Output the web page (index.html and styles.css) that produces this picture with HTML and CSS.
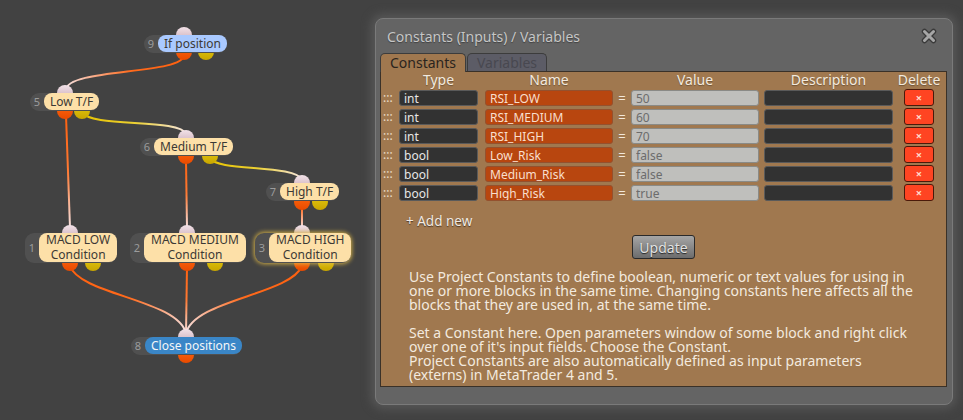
FILE: index.html
```html
<!DOCTYPE html>
<html lang="en">
  <head>
    <meta charset="UTF-8" />
    <title>Constants (Inputs) / Variables</title>
    <link rel="stylesheet" href="styles.css">
  </head>
  <body>
    <!-- Block diagram -->
    <div class="canvas">
      <svg class="wires" width="360" height="420" viewBox="0 0 360 420">
        <defs>
          <linearGradient id="w95" gradientUnits="userSpaceOnUse" x1="184" y1="56" x2="66" y2="90">
            <stop offset="0" stop-color="#ff600e" /><stop offset="0.45" stop-color="#ff6a1c" /><stop offset="1" stop-color="#f6e2e2" />
          </linearGradient>
          <linearGradient id="w56" gradientUnits="userSpaceOnUse" x1="82" y1="112" x2="186" y2="134">
            <stop offset="0" stop-color="#e6c200" /><stop offset="0.5" stop-color="#ecd030" /><stop offset="1" stop-color="#f6e6e2" />
          </linearGradient>
          <linearGradient id="w67" gradientUnits="userSpaceOnUse" x1="210" y1="158" x2="302" y2="180">
            <stop offset="0" stop-color="#e6c200" /><stop offset="0.5" stop-color="#ecd030" /><stop offset="1" stop-color="#f6e6e2" />
          </linearGradient>
          <linearGradient id="w51" gradientUnits="userSpaceOnUse" x1="66" y1="115" x2="70" y2="228">
            <stop offset="0" stop-color="#ff600e" /><stop offset="0.5" stop-color="#ff7a34" /><stop offset="1" stop-color="#f6e2e2" />
          </linearGradient>
          <linearGradient id="w62" gradientUnits="userSpaceOnUse" x1="186" y1="160" x2="187" y2="228">
            <stop offset="0" stop-color="#ff600e" /><stop offset="0.5" stop-color="#ff7a34" /><stop offset="1" stop-color="#f6e2e2" />
          </linearGradient>
          <linearGradient id="w73" gradientUnits="userSpaceOnUse" x1="302" y1="206" x2="302" y2="228">
            <stop offset="0" stop-color="#ff600e" /><stop offset="1" stop-color="#f6e2e2" />
          </linearGradient>
          <linearGradient id="w18" gradientUnits="userSpaceOnUse" x1="70" y1="266" x2="186" y2="334">
            <stop offset="0" stop-color="#ff600e" /><stop offset="0.5" stop-color="#ff6a1c" /><stop offset="1" stop-color="#f6e2e2" />
          </linearGradient>
          <linearGradient id="w28" gradientUnits="userSpaceOnUse" x1="187" y1="266" x2="186" y2="334">
            <stop offset="0" stop-color="#ff600e" /><stop offset="0.5" stop-color="#ff7a34" /><stop offset="1" stop-color="#f6e2e2" />
          </linearGradient>
          <linearGradient id="w38" gradientUnits="userSpaceOnUse" x1="302" y1="266" x2="186" y2="334">
            <stop offset="0" stop-color="#ff600e" /><stop offset="0.5" stop-color="#ff6a1c" /><stop offset="1" stop-color="#f6e2e2" />
          </linearGradient>
          <linearGradient id="pin-in" x1="0" y1="0" x2="0" y2="1">
            <stop offset="0" stop-color="#f2e2e8" /><stop offset="1" stop-color="#c6a6b2" />
          </linearGradient>
          <linearGradient id="pin-out" x1="0" y1="0" x2="0" y2="1">
            <stop offset="0" stop-color="#ff6a10" /><stop offset="1" stop-color="#e84a00" />
          </linearGradient>
          <linearGradient id="pin-alt" x1="0" y1="0" x2="0" y2="1">
            <stop offset="0" stop-color="#e8cc10" /><stop offset="1" stop-color="#c8a600" />
          </linearGradient>
        </defs>

        <!-- links -->
        <g fill="none" stroke-width="2">
          <path d="M184 55 C184 75 66 68 66 90" stroke="url(#w95)" />
          <path d="M82 112 C90 128 180 118 186 134" stroke="url(#w56)" />
          <path d="M210 158 C216 172 296 164 302 180" stroke="url(#w67)" />
          <path d="M66 115 L70 228" stroke="url(#w51)" />
          <path d="M186 160 L187 228" stroke="url(#w62)" />
          <path d="M302 206 L302 228" stroke="url(#w73)" />
          <path d="M70 266 C80 295 180 300 186 334" stroke="url(#w18)" />
          <path d="M187 266 L186 334" stroke="url(#w28)" />
          <path d="M302 266 C290 295 192 300 186 334" stroke="url(#w38)" />
        </g>

        <!-- inputs -->
        <g fill="url(#pin-in)">
          <circle cx="184" cy="35" r="8" />
          <circle cx="65" cy="93" r="8" />
          <circle cx="186" cy="138" r="8" />
          <circle cx="302" cy="183" r="8" />
          <circle cx="70" cy="233" r="8" />
          <circle cx="187" cy="233" r="8" />
          <circle cx="302" cy="233" r="8" />
          <circle cx="186" cy="337" r="8" />
        </g>

        <!-- outputs -->
        <g fill="url(#pin-out)">
          <circle cx="184" cy="52" r="8" />
          <circle cx="65" cy="111" r="8" />
          <circle cx="186" cy="156" r="8" />
          <circle cx="302" cy="202" r="8" />
          <circle cx="70" cy="263" r="8" />
          <circle cx="187" cy="263" r="8" />
          <circle cx="302" cy="263" r="8" />
          <circle cx="186" cy="355" r="8" />
        </g>
        <g fill="url(#pin-alt)">
          <circle cx="206" cy="52" r="8" />
          <circle cx="82" cy="111" r="8" />
          <circle cx="210" cy="156" r="8" />
          <circle cx="320" cy="202" r="8" />
          <circle cx="93" cy="263" r="8" />
          <circle cx="215" cy="263" r="8" />
          <circle cx="326" cy="263" r="8" />
        </g>
      </svg>

      <div class="node n9"><span class="num">9</span><span class="label sky">If position</span></div>
      <div class="node n5"><span class="num">5</span><span class="label">Low T/F</span></div>
      <div class="node n6"><span class="num">6</span><span class="label">Medium T/F</span></div>
      <div class="node n7"><span class="num">7</span><span class="label">High T/F</span></div>
      <div class="node n1"><span class="num">1</span><span class="label two">MACD LOW<br />Condition</span></div>
      <div class="node n2"><span class="num">2</span><span class="label two">MACD MEDIUM<br />Condition</span></div>
      <div class="node n3 selected"><span class="num">3</span><span class="label two">MACD HIGH<br />Condition</span></div>
      <div class="node n8"><span class="num">8</span><span class="label sea">Close positions</span></div>
    </div>

    <!-- Constants window -->
    <div class="dialog">
      <div class="dialog-title">
        <span>Constants (Inputs) / Variables</span>
        <svg class="close" width="16" height="16" viewBox="0 0 16 16">
          <path d="M3.5 3.5 L12.5 12.5 M12.5 3.5 L3.5 12.5" stroke="#3a3a3a" stroke-width="5.5" stroke-linecap="round" />
          <path d="M3.5 3.5 L12.5 12.5 M12.5 3.5 L3.5 12.5" stroke="#a6a6a6" stroke-width="3" stroke-linecap="round" />
        </svg>
      </div>

      <div class="tabs">
        <span class="tab active">Constants</span>
        <span class="tab">Variables</span>
      </div>

      <div class="panel">
        <div class="row head">
          <span class="grip"></span>
          <span class="c-type">Type</span>
          <span class="c-name">Name</span>
          <span class="c-eq"></span>
          <span class="c-value">Value</span>
          <span class="c-desc">Description</span>
          <span class="c-del">Delete</span>
        </div>

        <div class="row">
          <span class="grip">:::</span>
          <input class="c-type f-dark" value="int" readonly />
          <input class="c-name f-name" value="RSI_LOW" readonly />
          <span class="c-eq">=</span>
          <input class="c-value f-value" value="50" readonly />
          <input class="c-desc f-dark" value="" readonly />
          <button class="c-del del">×</button>
        </div>
        <div class="row">
          <span class="grip">:::</span>
          <input class="c-type f-dark" value="int" readonly />
          <input class="c-name f-name" value="RSI_MEDIUM" readonly />
          <span class="c-eq">=</span>
          <input class="c-value f-value" value="60" readonly />
          <input class="c-desc f-dark" value="" readonly />
          <button class="c-del del">×</button>
        </div>
        <div class="row">
          <span class="grip">:::</span>
          <input class="c-type f-dark" value="int" readonly />
          <input class="c-name f-name" value="RSI_HIGH" readonly />
          <span class="c-eq">=</span>
          <input class="c-value f-value" value="70" readonly />
          <input class="c-desc f-dark" value="" readonly />
          <button class="c-del del">×</button>
        </div>
        <div class="row">
          <span class="grip">:::</span>
          <input class="c-type f-dark" value="bool" readonly />
          <input class="c-name f-name" value="Low_Risk" readonly />
          <span class="c-eq">=</span>
          <input class="c-value f-value" value="false" readonly />
          <input class="c-desc f-dark" value="" readonly />
          <button class="c-del del">×</button>
        </div>
        <div class="row">
          <span class="grip">:::</span>
          <input class="c-type f-dark" value="bool" readonly />
          <input class="c-name f-name" value="Medium_Risk" readonly />
          <span class="c-eq">=</span>
          <input class="c-value f-value" value="false" readonly />
          <input class="c-desc f-dark" value="" readonly />
          <button class="c-del del">×</button>
        </div>
        <div class="row">
          <span class="grip">:::</span>
          <input class="c-type f-dark" value="bool" readonly />
          <input class="c-name f-name" value="High_Risk" readonly />
          <span class="c-eq">=</span>
          <input class="c-value f-value" value="true" readonly />
          <input class="c-desc f-dark" value="" readonly />
          <button class="c-del del">×</button>
        </div>

        <a href="#" class="add-new">+ Add new</a>

        <div class="actions">
          <button class="update">Update</button>
        </div>

        <div class="help">
          <p>
            Use Project Constants to define boolean, numeric or text values for using in<br />
            one or more blocks in the same time. Changing constants here affects all the<br />
            blocks that they are used in, at the same time.
          </p>
          <p>
            Set a Constant here. Open parameters window of some block and right click<br />
            over one of it's input fields. Choose the Constant.<br />
            Project Constants are also automatically defined as input parameters<br />
            (externs) in MetaTrader 4 and 5.
          </p>
        </div>
      </div>
    </div>
  </body>
</html>
```

FILE: styles.css
```css
/* ======= Variables ======= */
:root {
  --font: "Noto Sans", "Open Sans", sans-serif;
  --canvas-bg: #424242;
  --window-bg: #646464;
  --panel-bg: #a0784f;
  --panel-border: #3a3128;
  --node-back: #505050;
  --node-face: #fde0a8;
  --text-light: #f3eadf;
}

* {
  box-sizing: border-box;
  margin: 0;
  padding: 0;
}

body {
  position: relative;
  width: 963px;
  height: 420px;
  overflow: hidden;
  background: var(--canvas-bg);
  font-family: var(--font);
  font-size: 14px;
}

/* ======= Diagram ======= */
.canvas {
  position: relative;
  width: 360px;
  height: 420px;
}

.wires {
  position: absolute;
  left: 0;
  top: 0;
}

.node {
  position: absolute;
  display: flex;
  background: var(--node-back);
  border-radius: 9px;
  padding-bottom: 1px;
  font-size: 12px;
}

.num {
  display: flex;
  align-items: center;
  justify-content: center;
  width: 14px;
  color: #9c9c9c;
  font-size: 11px;
}

.label {
  background: var(--node-face);
  color: #3c3935;
  border-radius: 8px;
  padding: 0 6px;
  line-height: 17px;
  white-space: nowrap;
}

.label.two {
  line-height: 14.5px;
  padding: 0 7px;
  text-align: center;
}

.label.sky {
  background: #a9c9ff;
}

.label.sea {
  background: #3a86c7;
  color: #f4f6f8;
}

.node.selected {
  box-shadow: 0 0 4px 1px rgba(222, 184, 70, 0.9);
}

.n9 { left: 144px; top: 35px; }
.n5 { left: 30px; top: 93px; }
.n6 { left: 140px; top: 138px; }
.n7 { left: 266px; top: 183px; }
.n1 { left: 25px; top: 233px; }
.n2 { left: 130px; top: 233px; }
.n3 { left: 255px; top: 233px; }
.n8 { left: 131px; top: 337px; }

/* ======= Window ======= */
.dialog {
  position: absolute;
  left: 375px;
  top: 18px;
  width: 578px;
  height: 387px;
  background: var(--window-bg);
  border: 1px solid #7a7a7a;
  border-radius: 8px;
  box-shadow: 0 0 10px 4px #575757;
}

.dialog-title {
  display: flex;
  justify-content: space-between;
  align-items: center;
  height: 34px;
  padding: 0 15px 0 11px;
  color: #c6c6c6;
  text-shadow: 0 1px 1px rgba(0, 0, 0, 0.35);
  line-height: 17px;
}

.close {
  display: block;
}

/* ======= Tabs ======= */
.tabs {
  display: flex;
  gap: 1px;
  margin-left: 4px;
  height: 18px;
  position: relative;
  z-index: 1;
}

.tab {
  height: 18px;
  padding: 0 9px;
  line-height: 18px;
  border: 1px solid #3c3c3c;
  border-bottom: none;
  border-radius: 5px 5px 0 0;
  background: #5c5c66;
  color: #484850;
}

.tab.active {
  height: 19px;
  background: var(--panel-bg);
  color: #2a241e;
}

/* ======= Panel ======= */
.panel {
  margin: 0 5px 0 4px;
  height: 316px;
  background: var(--panel-bg);
  border: 1px solid var(--panel-border);
}

.row {
  display: flex;
  align-items: center;
  height: 16px;
  margin-top: 3px;
}

.row.head {
  height: 15px;
  margin-top: 0;
  color: var(--text-light);
  text-shadow: 0 1px 1px rgba(0, 0, 0, 0.3);
  line-height: 15px;
}

.row.head span {
  display: flex;
  justify-content: center;
  white-space: nowrap;
}

.grip {
  width: 18px;
  padding-left: 2px;
  color: #eadcc8;
  font-size: 12px;
  line-height: 16px;
}

.c-type { width: 79px; flex: none; }
.c-name { width: 128px; flex: none; margin-left: 7px; }
.c-eq {
  width: 18px;
  flex: none;
  text-align: center;
  color: #f2e8dc;
  font-size: 13px;
}
.c-value { width: 128px; flex: none; }
.c-desc { width: 129px; flex: none; margin-left: 5px; }
.c-del { width: 30px; flex: none; margin-left: 11px; }

input {
  height: 16px;
  border: 1px solid #5a5a5a;
  border-radius: 3px;
  padding: 0 4px;
  font-family: var(--font);
  font-size: 12px;
  line-height: 14px;
  outline: none;
}

.f-dark {
  background: #323232;
  color: #e6e6e6;
}

.f-name {
  background: #b8460f;
  border-color: #94512e;
  color: #f9dfcd;
}

.f-value {
  background: #bfbfbc;
  border-color: #8a8a86;
  color: #6c6c6c;
}

.del {
  height: 17px;
  margin-top: -1px;
  border: 1px solid #4a1a0a;
  border-radius: 3px;
  background: #ff4422;
  color: #ffd8c8;
  font-family: var(--font);
  font-size: 11px;
  font-weight: bold;
  line-height: 14px;
}

.add-new {
  display: inline-block;
  margin: 12px 0 0 25px;
  color: #f2eae2;
  font-size: 13.5px;
  text-decoration: none;
  line-height: 16px;
  text-shadow: 0 1px 1px rgba(0, 0, 0, 0.55);
}

.actions {
  display: flex;
  justify-content: center;
  margin-top: 5px;
}

.update {
  width: 63px;
  height: 24px;
  border: 1px solid #2a2a2a;
  border-radius: 3px;
  background: linear-gradient(#a6a6a6, #6c6c6c);
  color: #e2e2e2;
  font-family: var(--font);
  font-size: 14px;
  text-shadow: 0 1px 1px rgba(0, 0, 0, 0.7);
}

.help {
  margin-top: 11px;
  padding-left: 28px;
  color: var(--text-light);
  line-height: 14px;
  white-space: nowrap;
}

.help p + p {
  margin-top: 14px;
}
```
